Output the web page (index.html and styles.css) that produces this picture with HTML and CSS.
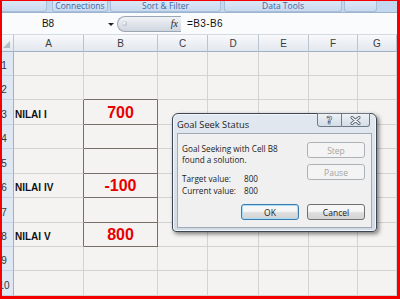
FILE: index.html
```html
<!DOCTYPE html>
<html lang="en">
<head>
  <meta charset="UTF-8" />
  <meta name="viewport" content="width=device-width, initial-scale=1" />
  <title>Goal Seek Status</title>

  <!-- Main page style -->
  <link rel="stylesheet" href="styles.css">
</head>
<body>
  <div class="screen">

    <!-- Ribbon group labels (Data tab) -->
    <div class="ribbon">
      <span class="grp grp-blank"></span>
      <span class="grp grp-conn">Connections</span>
      <span class="grp grp-sort">Sort &amp; Filter</span>
      <span class="grp grp-data">Data Tools</span>
      <span class="grp grp-outline"></span>
    </div>

    <!-- Name box + formula bar -->
    <div class="formula-bar">
      <div class="name-box">
        <span class="name">B8</span>
        <span class="arrow"></span>
      </div>
      <div class="fx-pill">
        <span class="grip"></span>
        <span class="fx">fx</span>
      </div>
      <div class="formula">=B3-B6</div>
    </div>

    <!-- Worksheet grid -->
    <div class="sheet">
      <div class="ch corner"></div>
      <div class="ch">A</div><div class="ch">B</div><div class="ch">C</div><div class="ch">D</div>
      <div class="ch">E</div><div class="ch">F</div><div class="ch">G</div>

      <div class="rh"><span>1</span></div>
      <div class="c"></div><div class="c"></div><div class="c"></div><div class="c"></div><div class="c"></div><div class="c"></div><div class="c"></div>

      <div class="rh"><span>2</span></div>
      <div class="c"></div><div class="c bxt"></div><div class="c"></div><div class="c"></div><div class="c"></div><div class="c"></div><div class="c"></div>

      <div class="rh"><span>3</span></div>
      <div class="c lbl bxl">NILAI I</div><div class="c val bx">700</div><div class="c"></div><div class="c"></div><div class="c"></div><div class="c"></div><div class="c"></div>

      <div class="rh"><span>4</span></div>
      <div class="c bxl"></div><div class="c bx"></div><div class="c"></div><div class="c"></div><div class="c"></div><div class="c"></div><div class="c"></div>

      <div class="rh"><span>5</span></div>
      <div class="c bxl"></div><div class="c bx"></div><div class="c"></div><div class="c"></div><div class="c"></div><div class="c"></div><div class="c"></div>

      <div class="rh"><span>6</span></div>
      <div class="c lbl bxl">NILAI IV</div><div class="c val bx">-100</div><div class="c"></div><div class="c"></div><div class="c"></div><div class="c"></div><div class="c"></div>

      <div class="rh"><span>7</span></div>
      <div class="c bxl"></div><div class="c bx"></div><div class="c"></div><div class="c"></div><div class="c"></div><div class="c"></div><div class="c"></div>

      <div class="rh"><span>8</span></div>
      <div class="c lbl bxl">NILAI V</div><div class="c val bx">800</div><div class="c"></div><div class="c"></div><div class="c"></div><div class="c"></div><div class="c"></div>

      <div class="rh"><span>9</span></div>
      <div class="c"></div><div class="c"></div><div class="c"></div><div class="c"></div><div class="c"></div><div class="c"></div><div class="c"></div>

      <div class="rh"><span>10</span></div>
      <div class="c"></div><div class="c"></div><div class="c"></div><div class="c"></div><div class="c"></div><div class="c"></div><div class="c"></div>
    </div>

    <!-- Goal Seek Status dialog -->
    <div class="dialog">
      <div class="dlg-titlebar">
        <span class="dlg-title">Goal Seek Status</span>
        <div class="cap-btns">
          <span class="cap-btn cap-help">?</span>
          <span class="cap-btn cap-close">
            <svg width="11" height="9" viewBox="0 0 11 9">
              <path d="M2 1.5 L9 7.5 M9 1.5 L2 7.5" stroke="#5a6270" stroke-width="3" stroke-linecap="round" fill="none"/>
              <path d="M2 1.5 L9 7.5 M9 1.5 L2 7.5" stroke="#fafbfc" stroke-width="1.3" stroke-linecap="round" fill="none"/>
            </svg>
          </span>
        </div>
      </div>
      <div class="dlg-client">
        <div class="dlg-top">
          <div class="dlg-msg">
            <p>Goal Seeking with Cell B8<br>found a solution.</p>
            <div class="dlg-vals">
              <span>Target value:</span><span>800</span>
              <span>Current value:</span><span>800</span>
            </div>
          </div>
          <div class="dlg-side">
            <button class="btn" disabled>Step</button>
            <button class="btn" disabled>Pause</button>
          </div>
        </div>
        <div class="dlg-bottom">
          <button class="btn btn-default">OK</button>
          <button class="btn">Cancel</button>
        </div>
      </div>
    </div>

  </div>
</body>
</html>
```

FILE: styles.css
```css
/* === BASE === */
* {
  box-sizing: border-box;
}

body {
  margin: 0;
  background: #fff;
  font-family: "Liberation Sans", Arial, sans-serif;
}

.screen {
  position: relative;
  width: 400px;
  height: 299px;
  border: solid #f40000;
  border-width: 1px 3px 3px 2px;
  overflow: hidden;
  background: #f4f3f1;
}

/* === RIBBON === */
.ribbon {
  height: 12px;
  display: flex;
  background: #c3d7ee;
  border-bottom: 1px solid #9db4d0;
}

.grp {
  height: 11px;
  background: linear-gradient(#dbe7f6, #c8daef);
  border: 1px solid #a7bedb;
  border-top: 0;
  border-radius: 0 0 3px 3px;
  font-family: "Open Sans", sans-serif;
  font-size: 8.5px;
  line-height: 9px;
  color: #3d66a5;
  text-align: center;
  white-space: nowrap;
}

.grp-blank   { width: 45px; border-left: 0; border-radius: 0 0 3px 0; }
.grp-conn    { width: 56px; margin-left: 5px; }
.grp-sort    { width: 111px; margin-left: 2px; }
.grp-data    { width: 118px; margin-left: 3px; }
.grp-outline { width: 33px; margin-left: 2px; }

/* === FORMULA BAR === */
.formula-bar {
  height: 22px;
  display: flex;
  align-items: center;
  background: #fafbfc;
  border-bottom: 1px solid #d3dae3;
}

.name-box {
  display: flex;
  align-items: center;
}

.name {
  width: 92px;
  text-align: center;
  font-size: 10px;
  color: #111;
}

.arrow {
  width: 0;
  margin-left: 14px;
  margin-top: 2px;
  border: 3px solid transparent;
  border-top: 3px solid #222;
  border-bottom: 0;
}

.fx-pill {
  width: 64px;
  height: 16px;
  margin-left: 3px;
  padding: 0 3px 0 4px;
  display: flex;
  align-items: center;
  justify-content: space-between;
  border: 1px solid #9ba6b4;
  border-right: 0;
  border-radius: 8px 0 0 8px;
  background: linear-gradient(#f1f3f6, #cfd6df);
}

.grip {
  width: 5px;
  height: 5px;
  border-radius: 50%;
  background: radial-gradient(circle at 40% 40%, #fff, #98a1ac);
}

.fx {
  font-family: "Liberation Serif", serif;
  font-style: italic;
  font-size: 10px;
  color: #222;
}

.formula {
  margin-left: 6px;
  font-size: 10px;
  letter-spacing: 0.4px;
  color: #111;
}

/* === SHEET GRID === */
.sheet {
  display: grid;
  grid-template-columns: 12px 70px 74px 50px 51px 50px 49px 39px;
  grid-template-rows: 17px 24px 24px 25px 24px 25px 24px 25px 24px 24px 25px;
}

.ch {
  display: flex;
  align-items: center;
  justify-content: center;
  background: linear-gradient(#f8f9fb, #e2e7ee);
  border-right: 1px solid #b9c4d1;
  border-bottom: 1px solid #9db2c9;
  font-size: 10px;
  color: #3c3c3c;
}

.corner {
  align-items: flex-end;
  justify-content: flex-end;
  padding: 0 3px 3px 0;
}

.corner::after {
  content: "";
  border-left: 7px solid transparent;
  border-bottom: 7px solid #b2bac4;
}

.rh {
  display: flex;
  align-items: flex-end;
  overflow: hidden;
  padding-bottom: 4px;
  background: #dfe7f2;
  border-right: 1px solid #9db2c9;
  border-bottom: 1px solid #c4d2e3;
  font-size: 10px;
  color: #333;
}

.rh span {
  flex: none;
  width: 20px;
  margin-left: -8px;
  text-align: center;
}

.c {
  display: flex;
  align-items: flex-end;
  border-right: 1px solid #d3d3d3;
  border-bottom: 1px solid #d3d3d3;
}

.lbl {
  padding: 0 0 4px 1px;
  font-size: 10px;
  line-height: 10px;
  font-weight: bold;
  color: #111;
}

.val {
  justify-content: center;
  padding-bottom: 3px;
  font-size: 16px;
  line-height: 16px;
  font-weight: bold;
  color: #e80000;
}

/* bordered range B3:B8 */
.bx  { border-right-color: #756f68; border-bottom-color: #756f68; }
.bxl { border-right-color: #756f68; }
.bxt { border-bottom-color: #756f68; }

/* === DIALOG === */
.dialog {
  position: absolute;
  left: 170px;
  top: 112px;
  width: 205px;
  height: 119px;
  display: flex;
  flex-direction: column;
  border: 1px solid #3e4552;
  border-radius: 6px 6px 4px 4px;
  background: linear-gradient(#e2e8ef, #d2dbe5);
  box-shadow: inset 0 0 0 1px #f4f7fa, 2px 2px 4px rgba(0, 0, 0, 0.5);
  font-family: "Open Sans", "Noto Sans", sans-serif;
  color: #1c1c1c;
}

.dlg-titlebar {
  height: 19px;
  display: flex;
  justify-content: space-between;
  align-items: flex-start;
}

.dlg-title {
  padding: 4px 0 0 4px;
  font-size: 9.3px;
  line-height: 13px;
}

.cap-btns {
  display: flex;
  margin: -1px 6px 0 0;
}

.cap-btn {
  height: 14px;
  display: flex;
  align-items: center;
  justify-content: center;
  border: 1px solid #6f7988;
  background: linear-gradient(#eef2f6, #d3dce6);
}

.cap-help {
  width: 25px;
  border-radius: 0 0 0 3px;
  font-family: "DejaVu Sans", sans-serif;
  font-size: 10px;
  font-weight: bold;
  color: #fbfcfd;
  -webkit-text-stroke: 0.7px #5a6270;
}

.cap-close {
  width: 28px;
  border-left: 0;
  border-radius: 0 0 3px 0;
}

.dlg-client {
  flex: 1;
  margin: 0 4px 3px 4px;
  padding: 8px 6px 7px 4px;
  display: flex;
  flex-direction: column;
  justify-content: space-between;
  background: #f0f0f0;
  border: 1px solid #a1abb8;
  font-size: 8.2px;
}

.dlg-top {
  display: flex;
  justify-content: space-between;
}

.dlg-msg p {
  margin: 1px 0 8px;
  line-height: 11.2px;
}

.dlg-vals {
  display: grid;
  grid-template-columns: 62px auto;
  line-height: 11.2px;
}

.dlg-side {
  display: flex;
  flex-direction: column;
  gap: 6px;
}

.dlg-bottom {
  display: flex;
  justify-content: flex-end;
  gap: 8px;
}

.btn {
  width: 58px;
  height: 16px;
  padding: 0;
  border: 1px solid #707070;
  border-radius: 3px;
  background: linear-gradient(#f6f6f6 45%, #dedede 55%, #d4d4d4);
  font-family: "Open Sans", "Noto Sans", sans-serif;
  font-size: 8.5px;
  color: #1c1c1c;
}

.btn:disabled {
  border-color: #adb2b7;
  background: #f4f4f4;
  color: #a3a3a3;
}

.btn-default {
  border-color: #3d7bad;
  box-shadow: inset 0 0 0 1px #a9dcf6;
}
```
